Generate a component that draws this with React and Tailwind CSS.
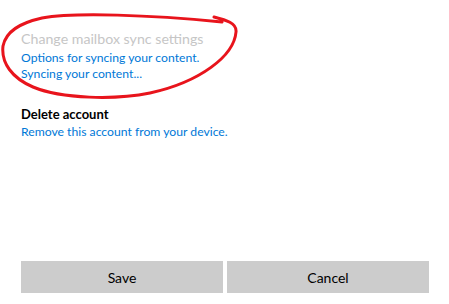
export default function App() {
  return (
    <div className="relative w-[449px] h-[304px] bg-white font-['Lato',sans-serif] overflow-hidden">
      <div className="flex flex-col h-full pl-[21px] pr-[20px] pt-[29px] pb-[11px]">
        {/* Sync settings */}
        <div className="flex flex-col">
          <div className="text-[14.2px] leading-[20px] text-[#c6c6c6]">Change mailbox sync settings</div>
          <div className="text-[12.2px] leading-[16px] text-[#0078d7] mt-[1px]">Options for syncing your content.</div>
          <div className="text-[12.2px] leading-[16px] text-[#0078d7]">Syncing your content...</div>
        </div>

        {/* Delete account */}
        <div className="flex flex-col mt-[23px]">
          <div className="text-[13px] leading-[18px] font-bold text-black">Delete account</div>
          <div className="text-[12.2px] leading-[16px] text-[#0078d7] mt-[1px]">Remove this account from your device.</div>
        </div>

        <div className="flex-1" />

        {/* Buttons */}
        <div className="flex gap-[4px]">
          <button className="w-[202px] h-[32px] bg-[#cccccc] text-[14px] text-black">Save</button>
          <button className="w-[202px] h-[32px] bg-[#cccccc] text-[14px] text-black">Cancel</button>
        </div>
      </div>

      {/* Hand-drawn annotation */}
      <svg className="absolute left-0 top-0 pointer-events-none" width="449" height="304" viewBox="0 0 449 304">
        <path
          d="M214 17 C226 20 237 23 236 32 C234 56 200 82 150 93 C115 100 62 99 33 87 C12 78 1 63 3 46 C6 31 20 23 42 18 C75 12 150 15 222 22"
          fill="none"
          stroke="#e8141c"
          strokeWidth="3"
          strokeLinecap="round"
          strokeLinejoin="round"
        />
      </svg>
    </div>
  );
}
